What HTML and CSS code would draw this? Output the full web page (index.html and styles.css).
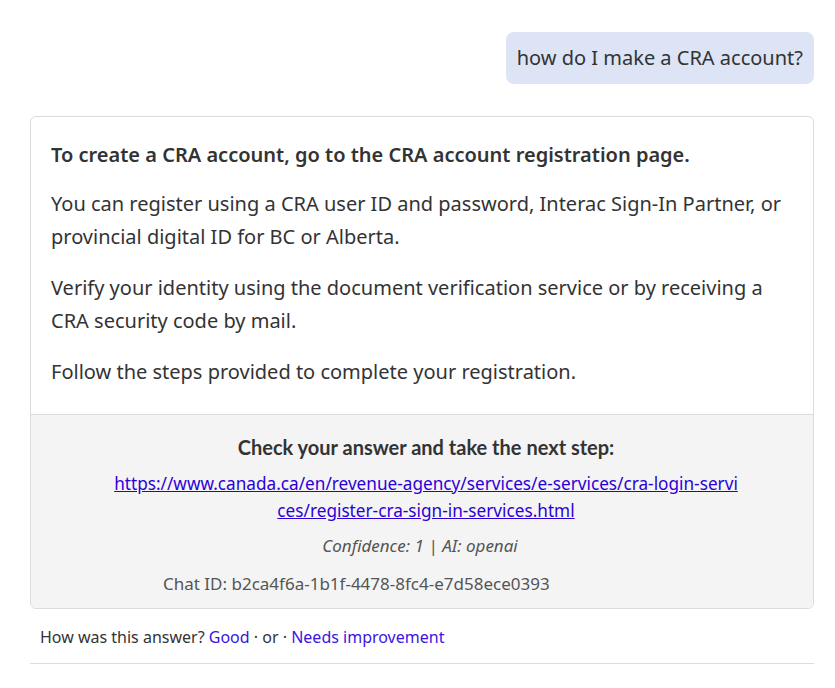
FILE: index.html
```html
<!DOCTYPE html>
<html lang="en">
<head>
<meta charset="utf-8">
<title>Chat</title>
<link rel="stylesheet" href="styles.css">
</head>
<body>
<div class="chat">
  <div class="user-row">
    <div class="user-bubble">how do I make a CRA account?</div>
  </div>
  <div class="answer-card">
    <div class="answer-body">
      <p class="lead">To create a CRA account, go to the CRA account registration page.</p>
      <p>You can register using a CRA user ID and password, Interac Sign-In Partner, or provincial digital ID for BC or Alberta.</p>
      <p>Verify your identity using the document verification service or by receiving a CRA security code by mail.</p>
      <p>Follow the steps provided to complete your registration.</p>
    </div>
    <div class="answer-meta">
      <h3 class="next-step">Check your answer and take the next step:</h3>
      <p class="citation"><a href="#">https://www.canada.ca/en/revenue-agency/services/e-services/cra-login-services/register-cra-sign-in-services.html</a></p>
      <p class="confidence">Confidence: 1 | AI: openai</p>
      <p class="chat-id">Chat ID: b2ca4f6a-1b1f-4478-8fc4-e7d58ece0393</p>
    </div>
  </div>
  <div class="feedback">How was this answer? <a href="#">Good</a> · or · <a href="#">Needs improvement</a></div>
</div>
</body>
</html>
```
FILE: styles.css
```css
html, body {
  margin: 0;
  padding: 0;
  background: #fff;
}
body {
  font-family: "Noto Sans", sans-serif;
  color: #333;
}
.chat {
  padding: 32px 21px 0 30px;
}
.user-row {
  display: flex;
  justify-content: flex-end;
}
.user-bubble {
  background: #dce4f5;
  border-radius: 8px;
  padding: 10px 11px;
  font-size: 20px;
  line-height: 32px;
}
.answer-card {
  margin-top: 32px;
  border: 1px solid #dcdcdc;
  border-radius: 6px;
  overflow: hidden;
}
.answer-body {
  padding: 21px 20px 26px 20px;
  font-size: 20px;
  line-height: 33px;
}
.answer-body p {
  margin: 0 0 18px 0;
}
.answer-body p:last-child {
  margin-bottom: 0;
}
.answer-body .lead {
  font-weight: 600;
  margin-bottom: 16px;
}
.answer-meta {
  background: #f4f4f4;
  border-top: 1px solid #dcdcdc;
  padding: 18px 20px 12px 28px;
  text-align: center;
}
.next-step {
  font-family: "Lato", sans-serif;
  font-size: 20px;
  line-height: 28px;
  font-weight: 700;
  margin: 0 0 9px;
}
.citation {
  margin: 0 auto;
  width: 630px;
  font-size: 17.2px;
  line-height: 27px;
  word-break: break-all;
}
.citation a {
  color: #2b00d8;
}
.confidence {
  font-style: italic;
  font-size: 17px;
  line-height: 24px;
  color: #555;
  margin: 10px 0 14px;
  padding-right: 12px;
}
.chat-id {
  font-size: 17px;
  line-height: 24px;
  color: #555;
  text-align: left;
  padding-left: 104px;
  margin: 0;
}
.feedback {
  padding: 17px 10px 15px;
  font-size: 16px;
  line-height: 22px;
  border-bottom: 1px solid #ddd;
}
.feedback a {
  color: #3a14e0;
  text-decoration: none;
}
```
